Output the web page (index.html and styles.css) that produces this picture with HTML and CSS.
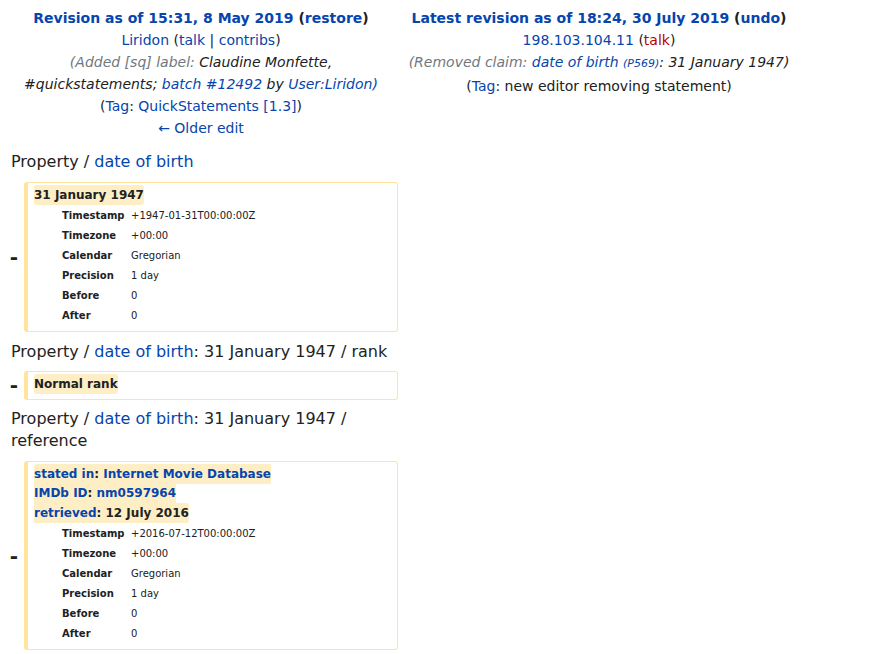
FILE: index.html
```html
<!DOCTYPE html>
<html lang="en">
<head>
<meta charset="utf-8">
<title>Difference between revisions</title>
<link rel="stylesheet" href="styles.css">
</head>
<body>
<div class="diff">
  <div class="head">
    <div class="side">
      <div class="title"><a href="#">Revision as of 15:31, 8 May 2019</a> (<a href="#">restore</a>)</div>
      <div><a href="#">Liridon</a> (<a href="#">talk</a> | <a href="#">contribs</a>)</div>
      <div class="comment"><span class="auto">(Added [sq] label: </span> Claudine Monfette, #quickstatements; <a href="#">batch #12492</a> by <a href="#">User:Liridon)</a></div>
      <div>(<a href="#">Tag</a>: <a href="#">QuickStatements [1.3]</a>)</div>
      <div><a href="#">← Older edit</a></div>
    </div>
    <div class="side">
      <div class="title"><a href="#">Latest revision as of 18:24, 30 July 2019</a> (<a href="#">undo</a>)</div>
      <div><a href="#">198.103.104.11</a> (<a href="#" class="new">talk</a>)</div>
      <div class="comment"><span class="auto">(Removed claim: </span> <a href="#">date of birth <span class="pid">(P569)</span></a>: 31 January 1947)</div>
      <div>(<a href="#">Tag</a>: new editor removing statement)</div>
    </div>
  </div>

  <div class="row first">
    <div class="ctx">Property / <a href="#">date of birth</a></div>
  </div>
  <div class="row">
    <div class="marker">-</div>
    <div class="box">
      <div class="lines"><span class="hl">31 January 1947</span></div>
      <table class="props">
        <tr><th>Timestamp</th><td>+1947-01-31T00:00:00Z</td></tr>
        <tr><th>Timezone</th><td>+00:00</td></tr>
        <tr><th>Calendar</th><td>Gregorian</td></tr>
        <tr><th>Precision</th><td>1 day</td></tr>
        <tr><th>Before</th><td>0</td></tr>
        <tr><th>After</th><td>0</td></tr>
      </table>
    </div>
  </div>

  <div class="row">
    <div class="ctx">Property / <a href="#">date of birth</a>: 31 January 1947 / rank</div>
  </div>
  <div class="row">
    <div class="marker">-</div>
    <div class="box">
      <div class="lines"><span class="hl">Normal rank</span></div>
    </div>
  </div>

  <div class="row">
    <div class="ctx">Property / <a href="#">date of birth</a>: 31 January 1947 / reference</div>
  </div>
  <div class="row">
    <div class="marker">-</div>
    <div class="box">
      <div class="lines"><span class="hl"><a href="#">stated in</a>: <a href="#">Internet Movie Database</a><br><a href="#">IMDb ID</a>: <a href="#">nm0597964</a><br><a href="#">retrieved</a>: 12 July 2016</span></div>
      <table class="props">
        <tr><th>Timestamp</th><td>+2016-07-12T00:00:00Z</td></tr>
        <tr><th>Timezone</th><td>+00:00</td></tr>
        <tr><th>Calendar</th><td>Gregorian</td></tr>
        <tr><th>Precision</th><td>1 day</td></tr>
        <tr><th>Before</th><td>0</td></tr>
        <tr><th>After</th><td>0</td></tr>
      </table>
    </div>
  </div>
</div>
</body>
</html>
```

FILE: styles.css
```css
html, body {
  margin: 0;
  padding: 0;
  background: #fff;
}
body {
  font-family: "DejaVu Sans", sans-serif;
  color: #202122;
}
a {
  color: #0645ad;
  text-decoration: none;
}
a.new {
  color: #ba0000;
}
.diff {
  width: 798px;
  padding: 7px 0 0 2px;
}
.head {
  display: grid;
  grid-template-columns: 398px 398px;
}
.side {
  text-align: center;
  font-size: 14px;
  line-height: 22px;
}
.title {
  font-weight: bold;
}
.comment {
  font-style: italic;
}
.comment .auto {
  color: #72777d;
}
.pid {
  font-size: 11px;
}
.row {
  display: grid;
  grid-template-columns: 22px 374px;
  width: 398px;
  align-items: center;
}
.row.first {
  margin-top: 3.5px;
}
.ctx {
  grid-column: 1 / 3;
  font-size: 16px;
  line-height: 22px;
  padding: 8.5px 8px 8.5px 9px;
  color: #222;
}
.marker {
  font-weight: bold;
  font-size: 20px;
  line-height: 20px;
  text-align: center;
  padding-left: 2px;
}
.box {
  border: 1px solid #ffe49c;
  border-left: 4px solid #ffe49c;
  border-radius: 3px;
  padding: 3px 6px 4px 6px;
}
.lines {
  font-size: 12px;
  line-height: 19.6px;
  font-weight: bold;
}
.hl {
  background: #feeec5;
  padding: 3px 0;
  border-radius: 3px;
}
.props {
  border-collapse: collapse;
  margin: 0 0 2px 28px;
  font-size: 10px;
}
.props th {
  text-align: left;
  font-weight: bold;
  width: 69px;
  height: 20px;
  padding: 0;
}
.props td {
  padding: 0;
  height: 20px;
}
```
